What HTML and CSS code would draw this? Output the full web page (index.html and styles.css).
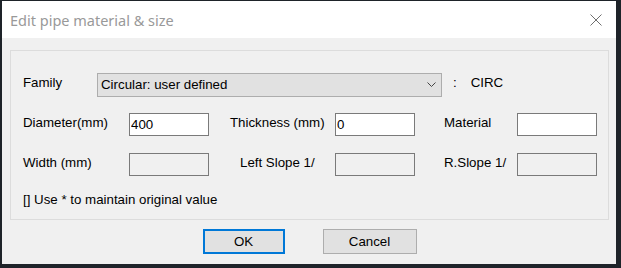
FILE: index.html
```html
<!DOCTYPE html>
<html>
  <head>
    <title>Edit pipe material &amp; size</title>
    <meta http-equiv="Content-Type" content="text/html; charset=utf-8" />
    <link rel="stylesheet" href="styles.css">
  </head>
  <body>

    <div class="window">
        <div class="titlebar">
            <span class="title">Edit pipe material &amp; size</span>
            <svg class="close" width="12" height="12" viewBox="0 0 12 12">
                <path d="M0.5 0.5 L11.5 11.5 M11.5 0.5 L0.5 11.5" stroke="#6f6f6f" stroke-width="1" fill="none"/>
            </svg>
        </div>

        <div class="client">
            <div class="group">
                <div class="row">
                    <span class="lbl lbl_family">Family</span>
                    <div class="combo">
                        <span>Circular: user defined</span>
                        <svg class="chevron" width="9" height="5" viewBox="0 0 9 5">
                            <path d="M0.5 0.5 L4.5 4.5 L8.5 0.5" stroke="#444" stroke-width="1" fill="none"/>
                        </svg>
                    </div>
                    <span class="colon">:</span>
                    <span class="code">CIRC</span>
                </div>

                <div class="row">
                    <span class="lbl lbl_first">Diameter(mm)</span>
                    <input class="edit" type="text" value="400">
                    <span class="lbl lbl_mid">Thickness (mm)</span>
                    <input class="edit" type="text" value="0">
                    <span class="lbl lbl_last">Material</span>
                    <input class="edit" type="text" value="">
                </div>

                <div class="row">
                    <span class="lbl lbl_first">Width (mm)</span>
                    <input class="edit" type="text" value="" disabled>
                    <span class="lbl lbl_mid lbl_slope">Left Slope 1/</span>
                    <input class="edit" type="text" value="" disabled>
                    <span class="lbl lbl_last">R.Slope 1/</span>
                    <input class="edit" type="text" value="" disabled>
                </div>

                <div class="note">[] Use * to maintain original value</div>
            </div>

            <div class="buttons">
                <button class="btn btn_default">OK</button>
                <button class="btn">Cancel</button>
            </div>
        </div>
    </div>

  </body>
</html>
```

FILE: styles.css
```css
body {
    margin: 0;
    padding: 1px 5px 4px 2px;
    background: #1e2329;
    font-family: "Liberation Sans", Arial, sans-serif;
    font-size: 13.3px;
    color: #000;
}

.window {
    width: 614px;
    height: 263px;
    background: #f0f0f0;
    display: flex;
    flex-direction: column;
}

.titlebar {
    flex: none;
    height: 37px;
    background: #fff;
    display: flex;
    align-items: center;
    padding: 0 14px 0 8px;
}
.title {
    flex: 1;
    font-family: "Noto Sans", sans-serif;
    font-size: 14.5px;
    color: #999;
    margin-top: 1px;
}
.close {
    display: block;
    margin-top: 1px;
}

.client {
    padding: 12px 7px 0 8px;
}

.group {
    box-sizing: border-box;
    border: 1px solid #dcdcdc;
    height: 170px;
    padding: 22px 0 0 12px;
}

.row {
    display: flex;
    align-items: center;
    height: 23px;
    margin-bottom: 17px;
}

.lbl {
    margin-bottom: 4px;
}
.lbl_family {
    width: 74px;
}
.lbl_first {
    width: 106px;
}
.lbl_mid {
    width: 105px;
    padding-left: 21px;
}
.lbl_slope {
    width: 95px;
    padding-left: 31px;
}
.lbl_last {
    width: 73px;
    padding-left: 29px;
}

.combo {
    box-sizing: border-box;
    width: 345px;
    height: 24px;
    background: #e1e1e1;
    border: 1px solid #adadad;
    display: flex;
    align-items: center;
    padding: 0 5px 0 3px;
}
.combo span {
    flex: 1;
}
.chevron {
    display: block;
}
.colon {
    margin-left: 11px;
    margin-bottom: 4px;
}
.code {
    margin-left: 14px;
    margin-bottom: 4px;
}

.edit {
    box-sizing: border-box;
    width: 80px;
    height: 23px;
    margin: 0;
    padding: 0 1px;
    border: 1px solid #7a7a7a;
    background: #fff;
    font-family: "Liberation Sans", Arial, sans-serif;
    font-size: 13.3px;
    color: #000;
    outline: none;
}
.edit:disabled {
    background: #f0f0f0;
    border-color: #7a7a7a;
}

.note {
    line-height: 15px;
    margin-top: -1px;
}

.buttons {
    display: flex;
    justify-content: center;
    gap: 38px;
    margin-top: 9px;
}
.btn {
    box-sizing: border-box;
    height: 25px;
    width: 94px;
    margin: 0;
    padding: 0;
    background: #e1e1e1;
    border: 1px solid #adadad;
    font-family: "Liberation Sans", Arial, sans-serif;
    font-size: 13.3px;
    color: #000;
}
.btn_default {
    width: 82px;
    border: 2px solid #0078d7;
}
```
